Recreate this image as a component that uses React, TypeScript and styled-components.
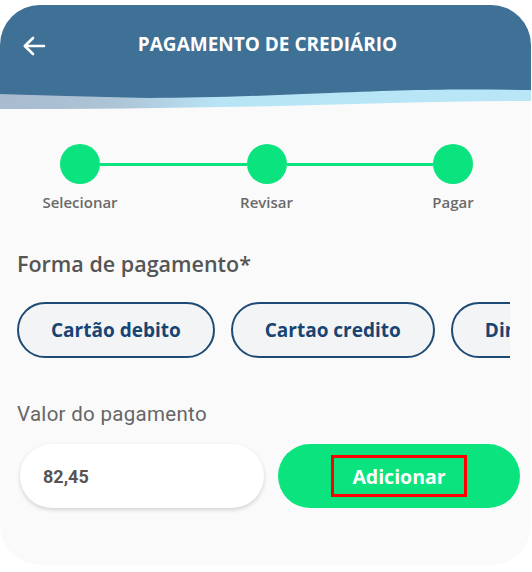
import styled, { createGlobalStyle } from "styled-components";

const GlobalStyle = createGlobalStyle`
  html, body {
    margin: 0;
    padding: 0;
    background: #ffffff;
  }
  * {
    box-sizing: border-box;
  }
`;

const steps = ["Selecionar", "Revisar", "Pagar"];
const methods = ["Cartão debito", "Cartao credito", "Dinheiro"];

export default function App() {
  return (
    <>
      <GlobalStyle />
      <Card>
        <Header>
          <BackButton aria-label="Voltar">
            <svg width="24" height="20" viewBox="0 0 24 20" fill="none">
              <path
                d="M22 10H3M11 2L2.8 10L11 18"
                stroke="#ffffff"
                strokeWidth="2.6"
                strokeLinecap="round"
                strokeLinejoin="round"
              />
            </svg>
          </BackButton>
          <Title>PAGAMENTO DE CREDIÁRIO</Title>
        </Header>
        <Wave viewBox="0 0 532 26" preserveAspectRatio="none">
          <defs>
            <linearGradient id="band" x1="0" x2="1" y1="0" y2="0">
              <stop offset="0" stopColor="#a8bbcf" />
              <stop offset="0.22" stopColor="#adc4d6" />
              <stop offset="0.42" stopColor="#b8e5f6" />
              <stop offset="1" stopColor="#b8e6f7" />
            </linearGradient>
          </defs>
          <path
            d="M0 0H532V16C440 16 360 19 280 21C180 23 90 24 0 24Z"
            fill="url(#band)"
          />
          <path
            d="M0 0H532V5C470 4 420 4 330 8C260 11 200 13 150 13C90 12 40 10 0 9Z"
            fill="#3f7095"
          />
        </Wave>

        <Stepper>
          {steps.map((s, i) => (
            <>
              <Dot key={"d" + s} />
              {i < steps.length - 1 && <Connector key={"c" + s} />}
            </>
          ))}
          {steps.map((s, i) => (
            <>
              <StepLabel key={"l" + s}>{s}</StepLabel>
              {i < steps.length - 1 && <span key={"g" + s} />}
            </>
          ))}
        </Stepper>

        <SectionTitle>Forma de pagamento*</SectionTitle>
        <Chips>
          {methods.map((m) => (
            <Chip key={m}>{m}</Chip>
          ))}
        </Chips>

        <FieldLabel>Valor do pagamento</FieldLabel>
        <AmountRow>
          <AmountInput>82,45</AmountInput>
          <AddButton>
            <Highlight>Adicionar</Highlight>
          </AddButton>
        </AmountRow>
      </Card>
    </>
  );
}

const Card = styled.main`
  margin-top: 5px;
  width: 531px;
  height: 560px;
  border-radius: 40px;
  background: #fafafa;
  overflow: hidden;
  display: flex;
  flex-direction: column;
  font-family: "Open Sans", "Lato", sans-serif;
`;

const Header = styled.header`
  height: 80px;
  background: #3f7095;
  padding: 24px 22px 0 22px;
  display: flex;
  align-items: flex-start;
`;

const BackButton = styled.div`
  width: 24px;
  height: 30px;
  display: flex;
  align-items: center;
  margin-top: 2px;
`;

const Title = styled.h1`
  margin: 0;
  flex: 1;
  height: 30px;
  line-height: 30px;
  text-align: center;
  padding-right: 20px;
  color: #ffffff;
  font-size: 19px;
  font-weight: 700;
`;

const Wave = styled.svg`
  display: block;
  width: 100%;
  height: 26px;
  flex-shrink: 0;
`;

const Stepper = styled.section`
  margin: 33px 58px 0 60px;
  display: grid;
  grid-template-columns: 40px 1fr 40px 1fr 40px;
  grid-template-rows: 40px 20px;
  row-gap: 8px;
  align-items: center;
`;

const Dot = styled.div`
  width: 40px;
  height: 40px;
  border-radius: 50%;
  background: #0be37f;
`;

const Connector = styled.div`
  height: 3px;
  background: #0be37f;
`;

const StepLabel = styled.div`
  display: flex;
  justify-content: center;
  white-space: nowrap;
  font-size: 15px;
  font-weight: 600;
  color: #6a6a6a;
  line-height: 20px;
`;

const SectionTitle = styled.h2`
  margin: 40px 0 0 17px;
  font-size: 21.5px;
  line-height: 24px;
  font-weight: 600;
  color: #555555;
`;

const Chips = styled.div`
  margin: 26px 21px 0 17px;
  display: flex;
  gap: 16px;
  overflow: hidden;
`;

const Chip = styled.button`
  flex-shrink: 0;
  height: 56px;
  padding: 0 32px;
  border-radius: 28px;
  border: 2px solid #1e4b75;
  background: #f3f4f5;
  color: #174472;
  font-family: "Open Sans", "Lato", sans-serif;
  font-size: 19px;
  font-weight: 700;
`;

const FieldLabel = styled.div`
  margin: 44px 0 0 17px;
  font-family: "Roboto", sans-serif;
  font-size: 20.5px;
  letter-spacing: 0.3px;
  line-height: 24px;
  color: #666666;
`;

const AmountRow = styled.div`
  margin: 18px 11px 0 20px;
  display: grid;
  grid-template-columns: 244px 242px;
  gap: 14px;
`;

const AmountInput = styled.div`
  height: 64px;
  border-radius: 32px;
  background: #ffffff;
  box-shadow: 0 2px 4px rgba(0, 0, 0, 0.16);
  padding-left: 23px;
  display: flex;
  align-items: center;
  font-family: "Roboto", sans-serif;
  font-weight: 700;
  font-size: 18px;
  color: #555555;
`;

const AddButton = styled.button`
  height: 64px;
  border: none;
  border-radius: 32px;
  background: #0be37f;
  display: flex;
  align-items: center;
  justify-content: center;
  padding: 0;
`;

const Highlight = styled.span`
  width: 136px;
  height: 42px;
  border: 3px solid #ff0000;
  display: flex;
  align-items: center;
  justify-content: center;
  color: #ffffff;
  font-family: "Open Sans", "Lato", sans-serif;
  font-size: 19.5px;
  font-weight: 700;
`;
